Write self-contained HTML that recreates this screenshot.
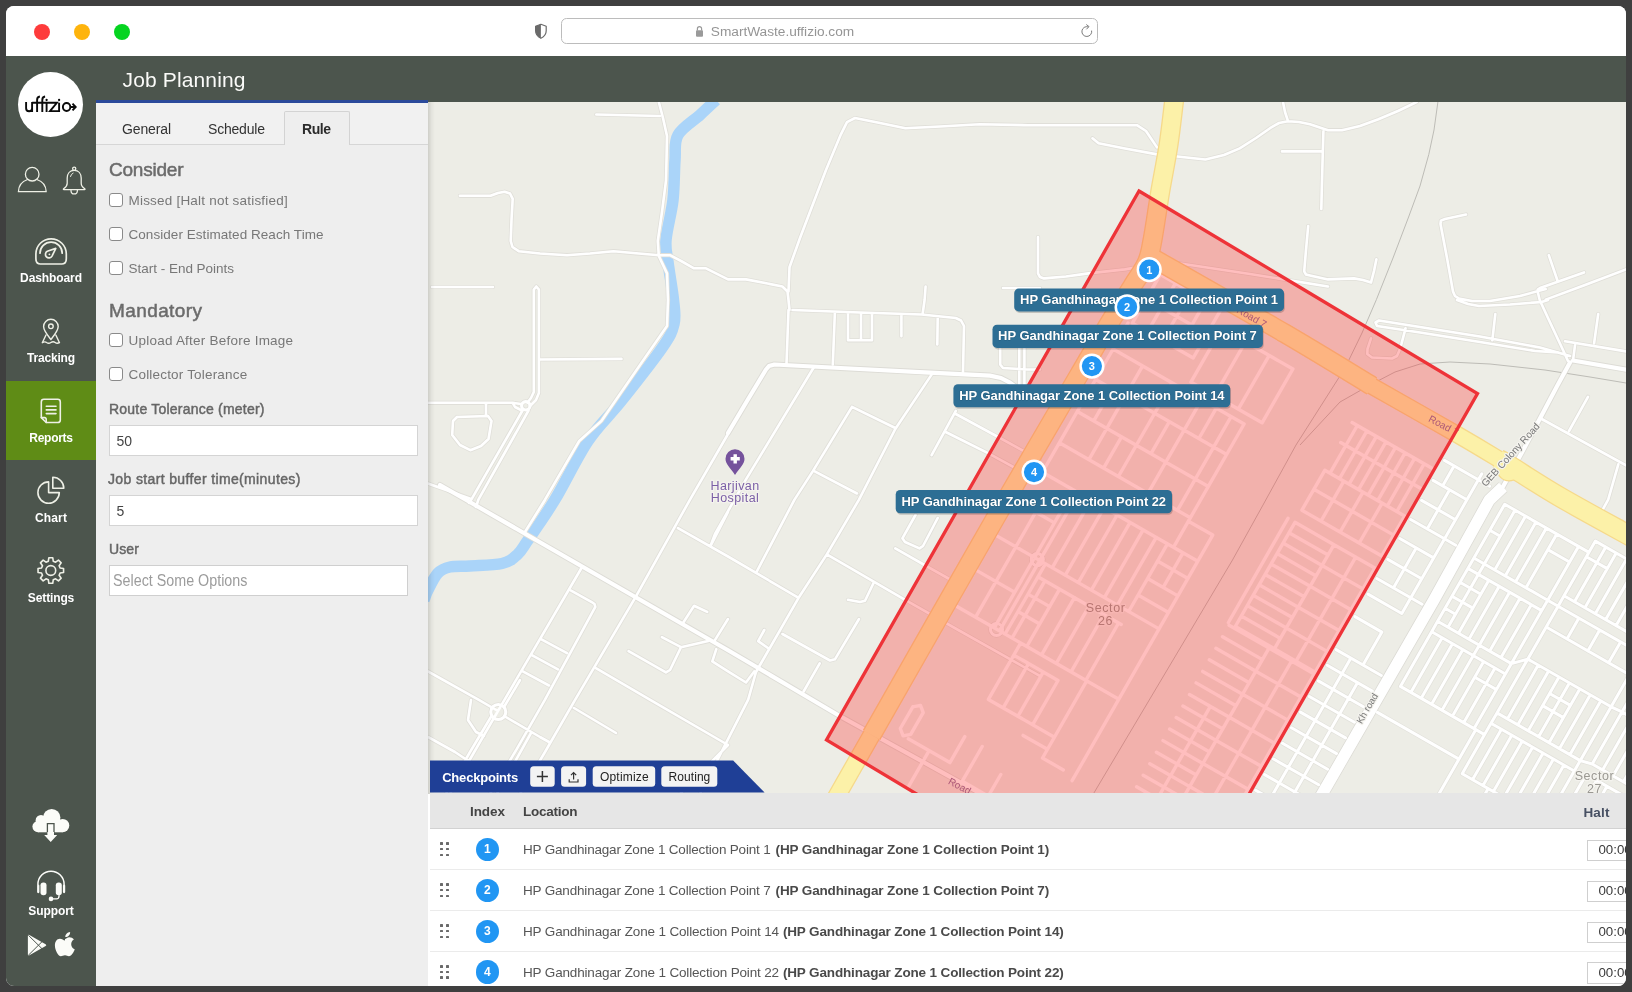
<!DOCTYPE html>
<html>
<head>
<meta charset="utf-8">
<title>Job Planning</title>
<style>
*{box-sizing:border-box;margin:0;padding:0}
html,body{width:1632px;height:992px;overflow:hidden;background:#3f3f3f;font-family:"Liberation Sans",sans-serif;}
.win{position:absolute;left:6px;top:6px;width:1620px;height:980px;border-radius:8px;overflow:hidden;background:#fff;will-change:transform;}
.abs{position:absolute}
.t{position:absolute;white-space:nowrap;line-height:1}
/* title bar */
.tb{position:absolute;left:0;top:0;width:1620px;height:50px;background:#fff}
.dot{position:absolute;top:18px;width:16px;height:16px;border-radius:50%}
.url{position:absolute;left:555px;top:12px;width:537px;height:26px;border:1px solid #bcbcbc;border-radius:5.500px;background:#fff}
/* header */
.hd{position:absolute;left:0;top:50px;width:1620px;height:46px;background:#4c554d}
/* sidebar */
.sb{position:absolute;left:0;top:50px;width:90px;height:930px;background:#4c554d}
.sbl{position:absolute;width:90px;left:0;text-align:center;color:#fff;font-size:12px;font-weight:bold;line-height:1;white-space:nowrap}
/* left panel */
.lp{position:absolute;left:90px;top:94px;width:332px;height:886px;background:#eeeeee;border-top:3px solid #2b4a9b}
.lbl{position:absolute;white-space:nowrap;line-height:1;color:#777;font-size:13.500px}
.cb{position:absolute;width:14px;height:14px;border:1px solid #8a8a8a;border-radius:3px;background:#fff}
.inp{position:absolute;background:#fff;border:1px solid #d4d4d4}
/* map */
.map{position:absolute;left:422px;top:96px;width:1198px;height:692px;background:#ecebe6;overflow:hidden}
/* table */
.tbl{position:absolute;left:424px;top:788px;width:1196px;height:192px;background:#fff}
/*FIT*/#l1{letter-spacing:-0.086px}#l2{letter-spacing:-0.194px}#l3{letter-spacing:-0.291px}#l4{letter-spacing:0.164px}#l5{letter-spacing:-0.135px}#l6{letter-spacing:-0.050px}#c1{letter-spacing:0.207px}#c2{letter-spacing:0.050px}#c3{letter-spacing:-0.013px}#c4{letter-spacing:0.229px}#c5{letter-spacing:0.188px}#f1{letter-spacing:0.218px}#f2{letter-spacing:0.362px}#f3{letter-spacing:0.079px}#h1{letter-spacing:-0.221px}#h2{letter-spacing:0.402px}#tab1{letter-spacing:-0.135px}#tab2{letter-spacing:-0.199px}#tab3{letter-spacing:-0.448px}#jp{letter-spacing:0.142px}#urltxt{letter-spacing:-0.017px}#th1{letter-spacing:-0.066px}#th2{letter-spacing:-0.264px}#th3{letter-spacing:0.161px}#r1a{letter-spacing:-0.185px}#r1b{letter-spacing:-0.145px}#r2a{letter-spacing:-0.185px}#r2b{letter-spacing:-0.145px}#r3a{letter-spacing:-0.158px}#r3b{letter-spacing:-0.146px}#r4a{letter-spacing:-0.158px}#r4b{letter-spacing:-0.146px}#cpt{letter-spacing:-0.202px}#bt1{letter-spacing:0.179px}#bt2{letter-spacing:0.054px}/*ENDFIT*/
</style>
</head>
<body>
<div class="win">
  <!-- TITLE BAR -->
  <div class="tb">
    <div class="dot" style="left:28px;background:#fe3b3b"></div>
    <div class="dot" style="left:68px;background:#feb40c"></div>
    <div class="dot" style="left:108px;background:#05d420"></div>
    <div class="url"></div>
    <div class="t" id="urltxt" style="left:704.800px;top:18.500px;font-size:13.700px;color:#959595">SmartWaste.uffizio.com</div>
    <svg class="abs" style="left:520px;top:10px" width="590" height="32" viewBox="526 16 590 32" fill="none">
      <path d="M540.900 24.300 l5.300 1.900 v4.600 c0 3.600-2.300 6.100-5.300 7.500 c-3-1.400-5.300-3.900-5.300-7.500 v-4.600z" stroke="#6a6a6a" stroke-width="1.200" stroke-linejoin="round"/>
      <path d="M540.900 24.300 l-5.300 1.900 v4.600 c0 3.600 2.300 6.100 5.300 7.500z" fill="#6a6a6a"/>
      <rect x="696" y="30.300" width="7" height="6.400" rx="1" fill="#9a9a9a"/>
      <path d="M697.400 30.500 v-1.800 a2.100 2.100 0 0 1 4.200 0 v1.800" stroke="#9a9a9a" stroke-width="1.200"/>
      <path d="M1091.600 30.600 a4.900 4.900 0 1 1-3.300-3.700" stroke="#7d7d7d" stroke-width="1"/>
      <path d="M1086.300 24.500 l2.700 2.100 l-2.600 2.700" stroke="#7d7d7d" stroke-width="1" stroke-linejoin="round"/>
    </svg>
  </div>
  <!-- HEADER -->
  <div class="hd">
    <div class="t" id="jp" style="left:116.500px;top:13px;font-size:21px;color:#fbfbf9">Job Planning</div>
  </div>
  <!-- SIDEBAR -->
  <div class="sb" id="sb">
    <div class="abs" style="left:0;top:325px;width:90px;height:79px;background:#5f8c16"></div>
    <svg class="abs" style="left:0;top:0" width="90" height="930" viewBox="6 56 90 930" fill="none" stroke="#eef0e6" stroke-width="1.4" stroke-linecap="round" stroke-linejoin="round">
      <!-- logo -->
      <circle cx="50.5" cy="104.5" r="32.5" fill="#fff" stroke="none"/>
      <g stroke="#0b0b0b" stroke-width="1.9" stroke-linecap="butt" stroke-linejoin="miter">
        <path d="M26.1 102 V108.3 a3 3 0 0 0 6 0 V102 M32.1 102 V111.9"/>
        <path d="M32.1 102.8 H56.9 L50 111.1 H59.9"/>
        <path d="M37.1 111.9 V99.9 Q37.1 96.8 39.9 96.5"/>
        <path d="M42.3 111.9 V99.9 Q42.3 96.8 45.1 96.5"/>
        <path d="M46.6 102.8 V111.9 M59.1 102.8 V111.9"/>
        <ellipse cx="66.6" cy="107" rx="3.7" ry="4"/>
        <path d="M70.3 107 H75.2 M72.5 103.6 L75.7 107 L72.5 110.4"/>
      </g>
      <circle cx="46.6" cy="100" r="1.15" fill="#0b0b0b" stroke="none"/>
      <circle cx="59.1" cy="100" r="1.15" fill="#0b0b0b" stroke="none"/>
      <!-- user -->
      <g stroke-width="1.3">
      <circle cx="32.2" cy="174.2" r="6.8"/>
      <path d="M27.6 179.5 C21.5 181.5 18.6 186 18.4 191.7 H46.2 C46 186 43 181.5 36.8 179.5"/>
      <!-- bell -->
      <circle cx="74.2" cy="168.7" r="1.6"/>
      <path d="M74.2 170.3 c-4.4 0-7 3.4-7 7.8 v5.2 c0 2.6-1.6 4.2-3.6 5.4 c-.5.4-.3 1 .3 1 h20.6 c.6 0 .8-.6.3-1 c-2-1.2-3.6-2.8-3.6-5.4 v-5.200 c0-4.4-2.600-7.800-7-7.800z"/>
      <path d="M71 190.400 a3.200 3.500 0 0 0 6.400 0"/>
      <path d="M70.500 176.500 q.5-2.600 2.600-3.400" stroke-width="1"/>
      </g>
      <!-- dashboard -->
      <g stroke-width="1.7">
      <path d="M35.900 254 a15.200 15.200 0 0 1 30.400 0 v4.500 q0 5.500-4.500 5.500 H40.400 q-4.500 0-4.500-5.500z"/>
      <path d="M40 253.200 a11.100 11.100 0 0 1 22.200 0"/>
      <path d="M55.800 248.400 L47.300 251.300 a3.500 3.500 0 1 0 4.700 4.800z"/>
      </g>
      <circle cx="49.400" cy="254.300" r=".9" fill="#eef0e6" stroke="none"/>
      <!-- tracking -->
      <g stroke-width="1.4">
      <path d="M50.900 339.600 C46.500 334 43.600 330.600 43.600 326.600 a7.300 7.300 0 0 1 14.600 0 C58.200 330.600 55.300 334 50.900 339.600z"/>
      <circle cx="50.900" cy="326.300" r="2.300"/>
      <path d="M46 335 L42.300 342.700 q2.600-1.500 4.300-.2 q2.100 1.500 4.300 0 q2.200-1.500 4.300 0 q1.700 1.300 4.300.2 L55.800 335"/>
      </g>
      <!-- reports -->
      <g stroke-width="1.600">
      <path d="M46.200 422.500 H57.700 a2.600 2.600 0 0 0 2.600-2.600 V401.900 a2.600 2.600 0 0 0-2.600-2.600 H43.900 a2.600 2.600 0 0 0-2.600 2.600 V417.600z"/>
      <path d="M41.300 417.600 H44.600 a1.600 1.600 0 0 1 1.600 1.600 V422.500"/>
      <path d="M46.300 406.200 H56 M46.300 409.900 H56 M46.300 413.600 H56"/>
      </g>
      <!-- chart -->
      <g stroke-width="1.600">
      <path d="M48.600 481.900 a10.700 10.700 0 1 0 10.700 10.700 H48.600z"/>
      <path d="M52.800 477.300 a11 11 0 0 1 11 11 H52.800z"/>
      </g>
      <!-- settings -->
      <g stroke-width="1.600">
      <path d="M48.33 561.22 L48.87 557.74 L52.73 557.74 L53.27 561.22 L55.61 562.19 L58.46 560.12 L61.18 562.84 L59.11 565.69 L60.08 568.03 L63.56 568.57 L63.56 572.43 L60.08 572.97 L59.11 575.31 L61.18 578.16 L58.46 580.88 L55.61 578.81 L53.27 579.78 L52.73 583.26 L48.87 583.26 L48.33 579.78 L45.99 578.81 L43.14 580.88 L40.42 578.16 L42.49 575.31 L41.52 572.97 L38.04 572.43 L38.04 568.57 L41.52 568.03 L42.49 565.69 L40.42 562.84 L43.14 560.12 L45.99 562.19 Z"/>
      <circle cx="50.800" cy="570.500" r="4.900"/>
      </g>
      <!-- cloud download -->
      <g fill="#fbfcf8" stroke="none">
        <circle cx="51.7" cy="817.6" r="8.7"/>
        <circle cx="41" cy="820.4" r="5.4"/>
        <circle cx="38" cy="826.6" r="5.6"/>
        <circle cx="62.600" cy="825.600" r="6.700"/>
        <rect x="38" y="820" width="24.600" height="12.300"/>
      </g>
      <path d="M47.400 833.500 V823.600 H54 V833.500" fill="#fbfcf8" stroke="#4c554d" stroke-width="1.300" stroke-linejoin="miter" stroke-linecap="butt"/>
      <path d="M47.400 832 H54 V835 H57.200 L50.700 841.900 L44.200 835 H47.400z" fill="#fbfcf8" stroke="none"/>
      <!-- headset -->
      <path d="M37.900 884.500 a13.100 13.300 0 0 1 26.200 0" stroke-width="1.500" stroke="#fbfcf8"/>
      <g fill="#fbfcf8" stroke="none">
        <rect x="40.500" y="882.400" width="6" height="12.900" rx="2.800"/>
        <rect x="55.800" y="882.400" width="6" height="12.900" rx="2.800"/>
        <rect x="37.100" y="884.600" width="2.300" height="8.600" rx="1.100"/>
        <rect x="62.900" y="884.600" width="2.300" height="8.600" rx="1.100"/>
        <circle cx="51" cy="898.900" r="2.300"/>
      </g>
      <path d="M52 898.800 H56.500 q2.600 0 2.600-3.400" stroke="#fbfcf8" stroke-width="1.300"/>
      <!-- play store -->
      <path d="M27.900 936 q0-1.700 1.500-.9 L45.600 944.300 q1.400.9 0 1.800 L29.400 955.300 q-1.500.8-1.500-.9z" fill="#fbfcf8" stroke="none"/>
      <path d="M28.300 935.200 L42.500 949.200 M28.300 955.300 L42.500 941.200" stroke="#4c554d" stroke-width="1" stroke-linecap="butt"/>
      <!-- apple -->
      <path d="M65 940.400 c-1.500 0-3-1.700-5.100-1.700 c-3 0-5 2.900-5 6.800 c0 4.500 3.200 10.700 6 10.700 c1.400 0 2.300-1 4.100-1 c1.800 0 2.400 1 4 1 c2.400 0 4.800-4 5.700-6.900 c-2.300-1-3.500-2.900-3.500-5.100 c0-2 1-3.600 2.700-4.600 c-1.100-1.500-2.800-2.300-4.600-2.300 c-1.900 0-3 1.700-4.300 1.700z" fill="#fbfcf8" stroke="none"/>
      <path d="M65.300 937.100 c-.2-2.500 2-4.900 4.800-5.100 c.3 2.600-2 5.100-4.800 5.100z" fill="#fbfcf8" stroke="none"/>
    </svg>
    <div class="sbl" id="l1" style="top:215.800px">Dashboard</div>
    <div class="sbl" id="l2" style="top:295.800px">Tracking</div>
    <div class="sbl" id="l3" style="top:375.800px">Reports</div>
    <div class="sbl" id="l4" style="top:455.800px">Chart</div>
    <div class="sbl" id="l5" style="top:535.800px">Settings</div>
    <div class="sbl" id="l6" style="top:849px">Support</div>
  </div>
  <!-- LEFT PANEL -->
  <div class="lp" id="lp"></div>
  <div class="pg" style="position:absolute;left:-6px;top:-6px;width:1632px;height:992px;z-index:5;pointer-events:none">
    <!-- tabs -->
    <div class="abs" style="left:96px;top:103px;width:332px;height:41px;background:#f1f1f1"></div>
    <div class="abs" style="left:96px;top:144px;width:332px;height:1px;background:#d6d6d6"></div>
    <div class="abs" style="left:284px;top:111px;width:66px;height:34px;background:#eeeeee;border:1px solid #d3d3d3;border-bottom:none;border-radius:2px 2px 0 0"></div>
    <div class="t" id="tab1" style="margin-top:.7px;left:122px;top:121px;font-size:14px;color:#333">General</div>
    <div class="t" id="tab2" style="margin-top:.7px;left:208px;top:121px;font-size:14px;color:#333">Schedule</div>
    <div class="t" id="tab3" style="margin-top:.7px;left:302px;top:121px;font-size:14px;color:#2b2b2b;font-weight:bold">Rule</div>
    <!-- consider -->
    <div class="t" id="h1" style="left:109px;top:160px;font-size:19px;color:#6b6b6b;-webkit-text-stroke:0.500px #6b6b6b">Consider</div>
    <div class="cb" style="left:109px;top:193px"></div>
    <div class="lbl" id="c1" style="left:128.500px;top:193.500px">Missed [Halt not satisfied]</div>
    <div class="cb" style="left:109px;top:227px"></div>
    <div class="lbl" id="c2" style="left:128.500px;top:227.700px">Consider Estimated Reach Time</div>
    <div class="cb" style="left:109px;top:261px"></div>
    <div class="lbl" id="c3" style="left:128.500px;top:262px">Start - End Points</div>
    <!-- mandatory -->
    <div class="t" id="h2" style="left:109px;top:301px;font-size:19px;color:#6b6b6b;-webkit-text-stroke:0.500px #6b6b6b">Mandatory</div>
    <div class="cb" style="left:109px;top:333px"></div>
    <div class="lbl" id="c4" style="left:128.500px;top:334px">Upload After Before Image</div>
    <div class="cb" style="left:109px;top:367px"></div>
    <div class="lbl" id="c5" style="left:128.500px;top:368px">Collector Tolerance</div>
    <div class="lbl" id="f1" style="left:109px;top:402px;color:#666;font-size:14px;margin-top:-.4px;-webkit-text-stroke:.45px #666">Route Tolerance (meter)</div>
    <div class="inp" style="left:109px;top:425px;width:309px;height:31px"></div>
    <div class="t" id="v1" style="left:116.500px;top:434px;font-size:14px;color:#444">50</div>
    <div class="lbl" id="f2" style="left:108px;top:472px;color:#666;font-size:14px;margin-top:-.4px;-webkit-text-stroke:.45px #666">Job start buffer time(minutes)</div>
    <div class="inp" style="left:109px;top:495px;width:309px;height:31px"></div>
    <div class="t" id="v2" style="left:116.500px;top:504px;font-size:14px;color:#444">5</div>
    <div class="lbl" id="f3" style="left:109px;top:542px;color:#666;font-size:14px;margin-top:-.4px;-webkit-text-stroke:.45px #666">User</div>
    <div class="inp" style="left:109px;top:565px;width:299px;height:31px;border-color:#cfcfcf"></div>
    <div class="t" id="v3" style="left:113.300px;top:572.500px;font-size:16px;color:#9c9c9c;transform:scaleX(.894);transform-origin:0 0">Select Some Options</div>
    <!-- TABLE (page coords) -->
    <div class="abs" style="left:430px;top:793px;width:1196px;height:36px;background:#e6e6e6;border-bottom:1px solid #d2d2d2"></div>
    <div class="t" id="th1" style="left:470px;top:805px;font-size:13.500px;font-weight:bold;color:#444">Index</div>
    <div class="t" id="th2" style="left:523px;top:805px;font-size:13.500px;font-weight:bold;color:#444">Location</div>
    <div class="t" id="th3" style="left:1583.400px;top:806px;font-size:13.500px;font-weight:bold;color:#475063">Halt</div>
    <div class="abs" style="left:440.3px;top:842.3px;width:2.600px;height:2.600px;background:#6a6a6a;border-radius:.5px"></div>
    <div class="abs" style="left:440.3px;top:847.9px;width:2.600px;height:2.600px;background:#6a6a6a;border-radius:.5px"></div>
    <div class="abs" style="left:440.3px;top:853.5px;width:2.600px;height:2.600px;background:#6a6a6a;border-radius:.5px"></div>
    <div class="abs" style="left:446.4px;top:842.3px;width:2.600px;height:2.600px;background:#6a6a6a;border-radius:.5px"></div>
    <div class="abs" style="left:446.4px;top:847.9px;width:2.600px;height:2.600px;background:#6a6a6a;border-radius:.5px"></div>
    <div class="abs" style="left:446.4px;top:853.5px;width:2.600px;height:2.600px;background:#6a6a6a;border-radius:.5px"></div>
    <div class="abs" style="left:475.7px;top:837.6px;width:23.200px;height:23.200px;border-radius:50%;background:#2196f3"></div>
    <div class="t" style="left:477.3px;top:843.2px;width:20px;text-align:center;font-size:12px;font-weight:bold;color:#fff">1</div>
    <div class="t" id="r1a" style="left:523px;top:843.3px;font-size:13.500px;color:#565656">HP Gandhinagar Zone 1 Collection Point 1</div>
    <div class="t" id="r1b" style="left:775.600px;top:843.3px;font-size:13.500px;font-weight:bold;color:#4a4a4a">(HP Gandhinagar Zone 1 Collection Point 1)</div>
    <div class="abs" style="left:1587px;top:839.6px;width:60px;height:21.600px;border:1px solid #cfcfcf;background:#fff"></div>
    <div class="t" style="left:1598.400px;top:843.2px;font-size:13.3px;color:#3a3a3a">00:00</div>
    <div class="abs" style="left:430px;top:869.2px;width:1196px;height:1px;background:#ebebeb"></div>
    <div class="abs" style="left:440.3px;top:883.3px;width:2.600px;height:2.600px;background:#6a6a6a;border-radius:.5px"></div>
    <div class="abs" style="left:440.3px;top:888.9px;width:2.600px;height:2.600px;background:#6a6a6a;border-radius:.5px"></div>
    <div class="abs" style="left:440.3px;top:894.5px;width:2.600px;height:2.600px;background:#6a6a6a;border-radius:.5px"></div>
    <div class="abs" style="left:446.4px;top:883.3px;width:2.600px;height:2.600px;background:#6a6a6a;border-radius:.5px"></div>
    <div class="abs" style="left:446.4px;top:888.9px;width:2.600px;height:2.600px;background:#6a6a6a;border-radius:.5px"></div>
    <div class="abs" style="left:446.4px;top:894.5px;width:2.600px;height:2.600px;background:#6a6a6a;border-radius:.5px"></div>
    <div class="abs" style="left:475.7px;top:878.6px;width:23.200px;height:23.200px;border-radius:50%;background:#2196f3"></div>
    <div class="t" style="left:477.3px;top:884.2px;width:20px;text-align:center;font-size:12px;font-weight:bold;color:#fff">2</div>
    <div class="t" id="r2a" style="left:523px;top:884.3px;font-size:13.500px;color:#565656">HP Gandhinagar Zone 1 Collection Point 7</div>
    <div class="t" id="r2b" style="left:775.600px;top:884.3px;font-size:13.500px;font-weight:bold;color:#4a4a4a">(HP Gandhinagar Zone 1 Collection Point 7)</div>
    <div class="abs" style="left:1587px;top:880.6px;width:60px;height:21.600px;border:1px solid #cfcfcf;background:#fff"></div>
    <div class="t" style="left:1598.400px;top:884.2px;font-size:13.3px;color:#3a3a3a">00:00</div>
    <div class="abs" style="left:430px;top:910.2px;width:1196px;height:1px;background:#ebebeb"></div>
    <div class="abs" style="left:440.3px;top:924.3px;width:2.600px;height:2.600px;background:#6a6a6a;border-radius:.5px"></div>
    <div class="abs" style="left:440.3px;top:929.9px;width:2.600px;height:2.600px;background:#6a6a6a;border-radius:.5px"></div>
    <div class="abs" style="left:440.3px;top:935.5px;width:2.600px;height:2.600px;background:#6a6a6a;border-radius:.5px"></div>
    <div class="abs" style="left:446.4px;top:924.3px;width:2.600px;height:2.600px;background:#6a6a6a;border-radius:.5px"></div>
    <div class="abs" style="left:446.4px;top:929.9px;width:2.600px;height:2.600px;background:#6a6a6a;border-radius:.5px"></div>
    <div class="abs" style="left:446.4px;top:935.5px;width:2.600px;height:2.600px;background:#6a6a6a;border-radius:.5px"></div>
    <div class="abs" style="left:475.7px;top:919.6px;width:23.200px;height:23.200px;border-radius:50%;background:#2196f3"></div>
    <div class="t" style="left:477.3px;top:925.2px;width:20px;text-align:center;font-size:12px;font-weight:bold;color:#fff">3</div>
    <div class="t" id="r3a" style="left:523px;top:925.3px;font-size:13.500px;color:#565656">HP Gandhinagar Zone 1 Collection Point 14</div>
    <div class="t" id="r3b" style="left:782.900px;top:925.3px;font-size:13.500px;font-weight:bold;color:#4a4a4a">(HP Gandhinagar Zone 1 Collection Point 14)</div>
    <div class="abs" style="left:1587px;top:921.6px;width:60px;height:21.600px;border:1px solid #cfcfcf;background:#fff"></div>
    <div class="t" style="left:1598.400px;top:925.2px;font-size:13.3px;color:#3a3a3a">00:00</div>
    <div class="abs" style="left:430px;top:951.0px;width:1196px;height:1px;background:#ebebeb"></div>
    <div class="abs" style="left:440.3px;top:965.1px;width:2.600px;height:2.600px;background:#6a6a6a;border-radius:.5px"></div>
    <div class="abs" style="left:440.3px;top:970.7px;width:2.600px;height:2.600px;background:#6a6a6a;border-radius:.5px"></div>
    <div class="abs" style="left:440.3px;top:976.3px;width:2.600px;height:2.600px;background:#6a6a6a;border-radius:.5px"></div>
    <div class="abs" style="left:446.4px;top:965.1px;width:2.600px;height:2.600px;background:#6a6a6a;border-radius:.5px"></div>
    <div class="abs" style="left:446.4px;top:970.7px;width:2.600px;height:2.600px;background:#6a6a6a;border-radius:.5px"></div>
    <div class="abs" style="left:446.4px;top:976.3px;width:2.600px;height:2.600px;background:#6a6a6a;border-radius:.5px"></div>
    <div class="abs" style="left:475.7px;top:960.4px;width:23.200px;height:23.200px;border-radius:50%;background:#2196f3"></div>
    <div class="t" style="left:477.3px;top:966.0px;width:20px;text-align:center;font-size:12px;font-weight:bold;color:#fff">4</div>
    <div class="t" id="r4a" style="left:523px;top:966.1px;font-size:13.500px;color:#565656">HP Gandhinagar Zone 1 Collection Point 22</div>
    <div class="t" id="r4b" style="left:782.900px;top:966.1px;font-size:13.500px;font-weight:bold;color:#4a4a4a">(HP Gandhinagar Zone 1 Collection Point 22)</div>
    <div class="abs" style="left:1587px;top:962.4px;width:60px;height:21.600px;border:1px solid #cfcfcf;background:#fff"></div>
    <div class="t" style="left:1598.400px;top:966.0px;font-size:13.3px;color:#3a3a3a">00:00</div>

    <!-- checkpoints bar -->
    <svg class="abs" style="left:430px;top:760px" width="340" height="33" viewBox="430 760 340 33"><path d="M430 760.600 H733.200 L764.600 792.600 H430z" fill="#1f3f96"/>
      <g fill="#f3f3f3"><rect x="530.200" y="766.200" width="24.500" height="20.600" rx="3.500"/><rect x="561.100" y="766.200" width="25" height="20.600" rx="3.500"/><rect x="592.700" y="766.200" width="62.500" height="20.600" rx="3.500"/><rect x="661.300" y="766.200" width="56" height="20.600" rx="3.500"/></g>
      <path d="M542.400 771 V782 M536.900 776.500 H547.900" stroke="#333" stroke-width="1.500" fill="none"/>
      <path d="M573.600 779.500 V772.800 M571 775.200 L573.600 772.600 L576.200 775.200 M569.200 779.300 V782 H578 V779.300" stroke="#333" stroke-width="1.200" fill="none"/>
    </svg>
    <div class="t" id="cpt" style="left:442.200px;top:770.500px;font-size:13px;font-weight:bold;color:#fff">Checkpoints</div>
    <div class="t" id="bt1" style="left:600px;top:771.200px;font-size:12px;color:#222">Optimize</div>
    <div class="t" id="bt2" style="left:668.600px;top:771.200px;font-size:12px;color:#222">Routing</div>

  </div>
  <!-- MAP -->
  <div class="map" id="map"><!--MAP--><svg class="abs" style="left:0;top:0" width="1198" height="692" viewBox="428 102 1198 692" font-family="Liberation Sans, sans-serif">
<defs><linearGradient id="shd" x1="0" x2="1" y1="0" y2="0"><stop offset="0" stop-color="#000" stop-opacity=".13"/><stop offset=".5" stop-color="#000" stop-opacity=".04"/><stop offset="1" stop-color="#000" stop-opacity="0"/></linearGradient><clipPath id="pc"><path d="M1139 191 L1477.5 393.5 L1164.5 942.5 L826.5 740z"/></clipPath></defs>
<rect x="428" y="102" width="1198" height="692" fill="#edede6"/>
<path d="M716 100 C713.3 102.5 706.3 109.2 700 115 C693.7 120.8 682.2 127.5 678 135 C673.8 142.5 675.8 149.2 675 160 C674.2 170.8 674.5 186.7 673 200 C671.5 213.3 666.8 229.7 666 240 C665.2 250.3 666.8 252 668 262 C669.2 272 672.5 289.7 673.5 300 C674.5 310.3 675.9 316 674 324 C672.1 332 670.8 335.2 662 348 C653.2 360.8 633.8 385.3 621.5 400.8 C609.2 416.3 599.1 424.5 588 441 C576.9 457.5 565 483.1 555 499.6 C545 516.1 534.3 530.8 528 540 C521.7 549.2 521.3 551.1 517 555 C512.7 558.9 509.8 561.7 502 563.5 C494.2 565.3 478.7 565.4 470 566 C461.3 566.6 455.3 565.8 450 567 C444.7 568.2 441.7 569.2 438 573 C434.3 576.8 430.3 585.5 428 590 C425.7 594.5 424.7 598.3 424 600" fill="none" stroke="#aad4f9" stroke-width="11.5" stroke-linejoin="round"/>
<path d="M1437.9 102 L1434 130 L1428.8 154.4 L1420 186 L1408.6 217 L1393 258 L1376.4 299.6 L1362 333 L1345 368 L1296 445 L1263 505 L1232.5 560 L1179 650 L1131.4 730 L1093.3 794 M1626 383 L1590 377 L1545 370 L1490 364 L1450 362 L1420 364 L1395 372 L1370 385 L1340 402 L1300 445" fill="none" stroke="#bdbcb6" stroke-width="1"/>
<g fill="none" stroke-linejoin="round" stroke-linecap="round">
<path d="M658.8 102 L663 118 L667 136 L666.5 160 L666 180.6 L662 212 L657.8 241 L658.8 256 L667 273.4 L668 300 L667 326 L641.7 362.5 L601.4 421 L579.2 441 L545 499.6 L524.8 532.3 M596.3 114.5 L659.8 116 M459.9 195.8 L490.5 195.8 L498 193 L504.6 191.7 L510 193.5 L512.7 198.8 L511.5 220 L510.7 241 L512.5 247 L518.7 251.2 L540 253.5 L567 255.2 L590 253.5 L613.5 251.2 L636 253.3 L658.8 255.2 L670 255.2 L682 261.5 L694 268.3 L706 268.3 L728 279.4 L746 279.4 L765 283 L782.4 286.5 L787.5 291.5 L788.5 300 L789.5 310 M432 287 L493 287 M533.8 300 L533.8 289.5 L536.3 286.5 L538.9 289.5 L538.9 300 M788.5 291.5 L789.5 267.3 L800 238 L812.7 204.8 L826 170 L840.9 134.3 L847 122.2 L855 118 L880 123 L905.4 128.2 L940 126.5 L980 124.2 L1028 125.2 L1100 125.2 L1136.9 125.2 L1146 131 L1157 147.4 M925.6 286.5 L924.6 300 L923.6 307 L922.6 314 M1003 288 L1028 288 M1092.5 138.3 L1098.6 143.3 L1125 148.5 L1157 154.4 L1177.2 156.5 L1205.4 159.5 L1224 155 L1239.7 148.4 L1256 138 L1270 128.2 L1279 123 L1288 121.2 L1299 122 L1310 124.2 L1328 130.2 L1342 130.2 L1360 126 L1378.4 119.2 L1398 111 L1416.7 102 M1288 121.2 L1285 112 L1283 102 M1323.4 131.3 L1322.3 170 L1321.3 208.9 M1282 151.4 L1322.4 151.4 M1038 237 L1038 273.4 L1040 277 L1044 278.4 L1066 276.5 L1088.5 273.4 L1124.8 269.4 L1150 265 L1177 263 L1250 274 L1328 286.5 M1308.2 226 L1306 250 L1304.2 271.4 L1306 274.5 L1310 275.4 L1328 279.4 L1354 278.4 L1363 280 L1371 282.5 L1374 271 L1376.4 259.3 M1466 214.5 L1445 219 L1440.9 220.6 L1440.5 224 L1447 258 L1453 291.5 L1455 296 L1459 298.6 L1472 301 L1490 301 L1520 296 L1545.7 289 M1548.8 255.2 L1557.8 281.5 M1584 272.4 L1540 288 L1537.7 289.5 L1538 293 L1539.7 300 L1548 318 L1563 350 L1568 361 M1626 269.4 L1585 285 L1545.7 299.6 M533.8 300 L533.8 392 L531 398 L527.5 402.5 M538.9 300 L538.9 393 L536 400 L530 406 M538.9 359.5 L621.5 358.9 M428 402.8 L512.7 402.8 L521 404 M512.7 402.8 L515 407 L521 410 M522.8 410 L471.3 499.6 L469 503 M528.5 410.5 L478.4 499.6 L476 507 M486 402.8 L486 415.5 M457 417 L488 416 L491.5 421 L488.5 439 L481 446 L470.3 450.2 L460 445 L452.2 435 L453 421 L457 417 M428 483.5 L470.3 498.6 M728 434 L690 499.6 L635.7 596.8 L575.2 699.6 L545 752 L520 794 M792.5 310 L860 312.5 L921.5 314.5 L955.8 318 L961 320.5 L964 326 L963 371.6 M788.5 310 L786.5 363.5 M834.9 312 L832.8 364.5 M848 313 L848 340.3 L872 340.3 L872 314 M861 314 L861 339 M901.4 315 L901.4 336.3 M937.7 318 L937.3 344.4 M813.7 367.5 L746 479.4 L715 534 L710.3 546.4 M931.6 374.6 L895.3 429 L859 499.6 L826.8 554.4 L798.6 597.8 L756 672 L748.2 699.6 L700 794 M852 406.9 L895.3 428 M852 406.9 L812.7 471.4 L794.5 499.6 L756.2 572.6 M814.7 471.4 L857 493.5 M955.8 410.9 L931.6 455.2 M955.8 414 L998.2 437 L1040 460 M945.7 432 L988 453.2 L1030 476 M1000.2 348.4 L1000.2 364.5 L1003 368 L1028 369.5 L1040 369.5 M1019.3 335 L1019.3 400 M1024.4 335 L1024.4 400 M1003 288 L1040 288 M545 500 L524.8 532.3 M581.2 568.5 L504.6 699.6 L480 742 L450 794 M571.1 590.7 L591.3 601.8 L594.5 604 L595.3 606.9 L545 699.6 L515 752 L490 794 M541 639.1 L567 653.2 M531.8 655.2 L558 669.4 M522.8 671.4 L549 685.5 M678 528.2 L728 556.5 L798.6 597.8 M710.3 546.4 L728 512 M596.3 668.3 L649.8 699.6 L728 745 M628.6 651.2 L665.9 672.4 L670 670 L681 647.2 L708.2 641.1 M661.9 637.1 L681 647.2 M683 623 L694.1 605.8 L707.2 611.9 M728 619 L714.3 641.1 M716.3 649.2 L712.3 661.3 L728 671.4 L746 682.5 L754.2 671.4 M428 671.4 L478.4 699.6 L498 711 M826.8 554.4 L903.4 598.8 L960 631 L1040 676 M873.2 583.7 L865 600.8 L860 602 L848 599.8 M859 619 L834.9 659.3 L830 660.5 L782.4 634 M764.3 630 L758.2 641.1 L768.3 648.2 M819.7 663.3 L803.6 691.5 M895.3 548.4 L923.6 564.5 L960 585 M915.5 515 L902.4 538.3 L905 542 L919.5 548.4 L923 546 L937.7 518 M428 737 L455 752 L470 762 M491.5 716 L470 752 L446 794 M505 716.5 L540 737 L549 742 M504 707 L520 680 M471 700 L468 720 L476 732 L484 736 M574 708 L616 733 M531 733 L497 794 M728 745 L680 794 M1379 320.5 L1420 327 L1480 336.5 L1540 347.5 L1557.8 352.4 L1570 356 M1379 320.5 L1375.5 322.5 L1377 326 L1420 332.5 L1480 342 L1535 351 L1557.8 352.4 M1405.6 328.2 L1401.6 343.3 L1399.6 350 L1397 356 L1392 358.5 L1372 357.5 L1367.3 354 L1367.5 349 L1371 338.3 M1495.3 314.1 L1492.3 340.3 M1457 300 L1468 304 L1479 306 L1510 304.5 L1541.7 302 L1548 300 M1598.2 314.1 L1594.1 343.3 M1565 341.3 L1626 351.4 M1575 345.4 L1573 360.5 M1541.7 419 L1626 465.3 M1588 396.8 L1569 431 M1618.3 464.3 L1608.2 499.6 L1597 520" stroke="#e0dfd9" stroke-width="4.2"/>
<path d="M1504.7 504.2 L1578.5 546.4 L1547.7 600.2 L1473.9 558 L1504.7 504.2 M1515.1 510.1 L1484.3 563.9 M1525.6 516.1 L1494.7 569.9 M1536 522.1 L1505.2 575.9 M1546.4 528 L1515.6 581.8 M1556.8 534 L1526 587.8 M1547.8 549.6 L1569.5 562 M1489.8 530.2 L1500.2 536.2 M1473.9 558 L1547.7 600.2 L1541.7 610.6 L1467.9 568.4 L1473.9 558 M1467.9 568.4 L1541.7 610.6 L1511.4 663.6 L1437.6 621.3 L1467.9 568.4 M1478.4 574.3 L1448 627.3 M1488.8 580.3 L1458.5 633.2 M1499.2 586.3 L1468.9 639.2 M1509.6 592.2 L1479.3 645.2 M1520 598.2 L1489.7 651.1 M1531.3 604.7 L1501 657.6 M1460 582.3 L1480.8 594.2 M1452 596.2 L1472.9 608.1 M1445.1 608.3 L1455.5 614.3 M1437.6 621.3 L1511.4 663.6 L1505.4 674 L1431.7 631.7 L1437.6 621.3 M1431.7 631.7 L1505.4 674 L1474.1 728.6 L1400.4 686.4 L1431.7 631.7 M1442.1 637.7 L1410.8 692.4 M1452.5 643.7 L1421.2 698.3 M1462.9 649.6 L1431.6 704.3 M1473.3 655.6 L1442 710.3 M1483.7 661.5 L1452.4 716.2 M1495 668 L1463.7 722.7 M1474.8 677.2 L1496.5 689.6 M1478.4 574.3 L1484.3 563.9 M1473.3 655.6 L1479.3 645.2 M1595.4 541.1 L1678.7 588.8 L1647.4 643.5 L1564 595.8 L1595.4 541.1 M1605.8 547.1 L1574.5 601.7 M1616.2 553 L1584.9 607.7 M1626.6 559 L1595.3 613.7 M1637 564.9 L1605.7 619.6 M1647.4 570.9 L1616.1 625.6 M1657.8 576.9 L1626.5 631.5 M1668.3 582.8 L1636.9 637.5 M1586.4 556.7 L1607.2 568.6 M1641.4 605.5 L1662.3 617.4 M1635.5 615.9 L1656.3 627.9 M1564 595.8 L1647.4 643.5 L1641.4 653.9 L1558.1 606.2 L1564 595.8 M1558.1 606.2 L1641.4 653.9 L1629.5 674.7 L1546.2 627 L1558.1 606.2 M1578.9 618.1 L1567 638.9 M1599.7 630 L1587.8 650.9 M1620.6 642 L1608.6 662.8 M1546.2 627 L1629.5 674.7 L1611.1 706.8 L1527.8 659.1 L1546.2 627 M1527.8 659.1 L1611.1 706.8 L1580.3 760.6 L1497 712.9 L1527.8 659.1 M1538.2 665.1 L1507.4 718.9 M1548.6 671 L1517.8 724.8 M1559 677 L1528.2 730.8 M1569.4 683 L1538.6 736.8 M1579.8 688.9 L1549 742.7 M1590.2 694.9 L1559.4 748.7 M1600.7 700.9 L1569.9 754.7 M1549.6 693.5 L1570.4 705.4 M1542.6 705.6 L1563.4 717.6 M1497 712.9 L1580.3 760.6 L1574.3 771 L1491 723.3 L1497 712.9 M1491 723.3 L1574.3 771 L1545.5 821.4 L1462.2 773.7 L1491 723.3 M1501.4 729.3 L1472.6 779.6 M1511.8 735.3 L1483 785.6 M1522.2 741.2 L1493.4 791.5 M1532.6 747.2 L1503.8 797.5 M1543.1 753.1 L1514.2 803.5 M1553.5 759.1 L1524.6 809.4 M1563.9 765.1 L1535.1 815.4 M1695.5 583.5 L1766.7 624.2 L1734.9 679.8 L1663.7 639 L1695.5 583.5 M1706 589.4 L1674.1 645 M1716.4 595.4 L1684.6 650.9 M1726.8 601.4 L1695 656.9 M1737.2 607.3 L1705.4 662.9 M1747.6 613.3 L1715.8 668.8 M1758 619.3 L1726.2 674.8 M1685.6 600.8 L1706.4 612.8 M1698.5 626.7 L1719.3 638.6 M1663.7 639 L1734.9 679.8 L1728.9 690.2 L1657.8 649.4 L1663.7 639 M1657.8 649.4 L1728.9 690.2 L1699.1 742.3 L1628 701.5 L1657.8 649.4 M1668.2 655.4 L1638.4 707.5 M1678.6 661.4 L1648.8 713.4 M1689 667.3 L1659.2 719.4 M1699.4 673.3 L1669.6 725.4 M1709.8 679.3 L1680 731.3 M1720.2 685.2 L1690.4 737.3 M1658.2 672.8 L1679.1 684.7 M1671.1 698.6 L1691.9 710.5 M1628 701.5 L1699.1 742.3 L1693.1 752.7 L1622 711.9 L1628 701.5 M1622 711.9 L1693.1 752.7 L1663.3 804.7 L1592.2 764 L1622 711.9 M1632.4 717.9 L1602.6 769.9 M1642.8 723.8 L1613 775.9 M1653.2 729.8 L1623.4 781.9 M1663.6 735.8 L1633.8 787.8 M1674.1 741.7 L1644.2 793.8 M1684.5 747.7 L1654.6 799.8 M1586.2 774.4 L1657.4 815.1 L1627 868.1 L1555.9 827.3 L1586.2 774.4 M1596.6 780.4 L1566.3 833.3 M1607 786.3 L1576.7 839.3 M1617.4 792.3 L1587.1 845.2 M1627.9 798.2 L1597.5 851.2 M1638.3 804.2 L1608 857.1 M1648.7 810.2 L1618.4 863.1 M1578.5 546.4 L1588.9 552.4 M1547.7 600.2 L1558.1 606.2 M1511.4 663.6 L1527.8 659.1 M1474.1 728.6 L1484.5 734.6 M1678.7 588.8 L1689.1 594.8 M1647.4 643.5 L1657.8 649.4 M1611.1 706.8 L1622 711.9 M1580.3 760.6 L1592.2 764 M1545.5 821.4 L1555.9 827.3 M1377.4 712.4 L1459 759.1 M1475.9 729.6 L1411.2 842.4 M1436.1 799.1 L1470.8 818.9 M1488.2 788.6 L1450.9 853.6 M1451.8 821.9 L1432.9 854.9 M1481.8 473.8 L1401.8 613.5 M1444.5 460.4 L1478.3 479.8 M1433.1 480.4 L1466.9 499.8 M1421.6 500.4 L1455.5 519.7 M1410.7 519.5 L1444.5 538.8 M1399.8 538.5 L1433.6 557.9 M1387.8 559.4 L1421.7 578.8 M1376.9 578.5 L1410.7 597.8 M1368 594.1 L1401.8 613.5 M1478.3 479.8 L1489.6 486.3 M1444.5 538.8 L1455.8 545.3 M1410.7 597.8 L1422 604.3 M1449.5 489.9 L1427.2 528.9 M1416.2 548 L1393.4 587.9 M1454 465.9 L1442.6 485.9 M1355 616.6 L1381.9 632.1 M1381.9 632.1 L1363 665 M1336.1 649.6 L1381.3 675.5 M1327.2 665.2 L1372.3 691.1 M1318.3 680.9 L1363.4 706.7 M1309.3 696.5 L1354.4 722.3 M1300.4 712.1 L1345.5 737.9 M1291.4 727.7 L1336.5 753.6 M1282.5 743.3 L1327.6 769.2 M1273.5 759 L1318.7 784.8 M1264.6 774.6 L1309.7 800.4 M1255.6 790.2 L1300.8 816 M1350.9 658.1 L1266.4 805.6 M1357.6 682.6 L1282 814.5" stroke="#e2e1db" stroke-width="4.4"/>
<path d="M728 433 L747 401 L766 369.5 L769 366 L774.4 364.5 L850 368.5 L929.6 372.6 L990 375.6 L1001 378 L1010 382.7 L1020 390 M440 485 L466.3 500 L728 650.2 L790 686.7 L838 715 L948 775.6 L985 796 M1573 360.5 L1626 369.6 M1570 362.5 L1557.8 384.7 L1539.7 419 L1521.5 453.2 L1501.4 489.5" stroke="#dddcd6" stroke-width="6"/>
<path d="M1503 487 L1489.3 500 L1433.9 600 L1322.4 793.6 L1318 801" stroke="#dcdbd5" stroke-width="13" stroke-linecap="butt"/>
<circle cx="525.8" cy="405.8" r="4.2" stroke="#e0dfd9" stroke-width="4.5" fill="#edede6"/>
<circle cx="498.3" cy="712" r="7.5" stroke="#e0dfd9" stroke-width="4.5" fill="#edede6"/>
<circle cx="1037.3" cy="559.6" r="6" stroke="#e0dfd9" stroke-width="4.5" fill="#edede6"/>
<circle cx="996.5" cy="629.5" r="6" stroke="#e0dfd9" stroke-width="4.5" fill="#edede6"/>
<path d="M658.8 102 L663 118 L667 136 L666.5 160 L666 180.6 L662 212 L657.8 241 L658.8 256 L667 273.4 L668 300 L667 326 L641.7 362.5 L601.4 421 L579.2 441 L545 499.6 L524.8 532.3 M596.3 114.5 L659.8 116 M459.9 195.8 L490.5 195.8 L498 193 L504.6 191.7 L510 193.5 L512.7 198.8 L511.5 220 L510.7 241 L512.5 247 L518.7 251.2 L540 253.5 L567 255.2 L590 253.5 L613.5 251.2 L636 253.3 L658.8 255.2 L670 255.2 L682 261.5 L694 268.3 L706 268.3 L728 279.4 L746 279.4 L765 283 L782.4 286.5 L787.5 291.5 L788.5 300 L789.5 310 M432 287 L493 287 M533.8 300 L533.8 289.5 L536.3 286.5 L538.9 289.5 L538.9 300 M788.5 291.5 L789.5 267.3 L800 238 L812.7 204.8 L826 170 L840.9 134.3 L847 122.2 L855 118 L880 123 L905.4 128.2 L940 126.5 L980 124.2 L1028 125.2 L1100 125.2 L1136.9 125.2 L1146 131 L1157 147.4 M925.6 286.5 L924.6 300 L923.6 307 L922.6 314 M1003 288 L1028 288 M1092.5 138.3 L1098.6 143.3 L1125 148.5 L1157 154.4 L1177.2 156.5 L1205.4 159.5 L1224 155 L1239.7 148.4 L1256 138 L1270 128.2 L1279 123 L1288 121.2 L1299 122 L1310 124.2 L1328 130.2 L1342 130.2 L1360 126 L1378.4 119.2 L1398 111 L1416.7 102 M1288 121.2 L1285 112 L1283 102 M1323.4 131.3 L1322.3 170 L1321.3 208.9 M1282 151.4 L1322.4 151.4 M1038 237 L1038 273.4 L1040 277 L1044 278.4 L1066 276.5 L1088.5 273.4 L1124.8 269.4 L1150 265 L1177 263 L1250 274 L1328 286.5 M1308.2 226 L1306 250 L1304.2 271.4 L1306 274.5 L1310 275.4 L1328 279.4 L1354 278.4 L1363 280 L1371 282.5 L1374 271 L1376.4 259.3 M1466 214.5 L1445 219 L1440.9 220.6 L1440.5 224 L1447 258 L1453 291.5 L1455 296 L1459 298.6 L1472 301 L1490 301 L1520 296 L1545.7 289 M1548.8 255.2 L1557.8 281.5 M1584 272.4 L1540 288 L1537.7 289.5 L1538 293 L1539.7 300 L1548 318 L1563 350 L1568 361 M1626 269.4 L1585 285 L1545.7 299.6 M533.8 300 L533.8 392 L531 398 L527.5 402.5 M538.9 300 L538.9 393 L536 400 L530 406 M538.9 359.5 L621.5 358.9 M428 402.8 L512.7 402.8 L521 404 M512.7 402.8 L515 407 L521 410 M522.8 410 L471.3 499.6 L469 503 M528.5 410.5 L478.4 499.6 L476 507 M486 402.8 L486 415.5 M457 417 L488 416 L491.5 421 L488.5 439 L481 446 L470.3 450.2 L460 445 L452.2 435 L453 421 L457 417 M428 483.5 L470.3 498.6 M728 434 L690 499.6 L635.7 596.8 L575.2 699.6 L545 752 L520 794 M792.5 310 L860 312.5 L921.5 314.5 L955.8 318 L961 320.5 L964 326 L963 371.6 M788.5 310 L786.5 363.5 M834.9 312 L832.8 364.5 M848 313 L848 340.3 L872 340.3 L872 314 M861 314 L861 339 M901.4 315 L901.4 336.3 M937.7 318 L937.3 344.4 M813.7 367.5 L746 479.4 L715 534 L710.3 546.4 M931.6 374.6 L895.3 429 L859 499.6 L826.8 554.4 L798.6 597.8 L756 672 L748.2 699.6 L700 794 M852 406.9 L895.3 428 M852 406.9 L812.7 471.4 L794.5 499.6 L756.2 572.6 M814.7 471.4 L857 493.5 M955.8 410.9 L931.6 455.2 M955.8 414 L998.2 437 L1040 460 M945.7 432 L988 453.2 L1030 476 M1000.2 348.4 L1000.2 364.5 L1003 368 L1028 369.5 L1040 369.5 M1019.3 335 L1019.3 400 M1024.4 335 L1024.4 400 M1003 288 L1040 288 M545 500 L524.8 532.3 M581.2 568.5 L504.6 699.6 L480 742 L450 794 M571.1 590.7 L591.3 601.8 L594.5 604 L595.3 606.9 L545 699.6 L515 752 L490 794 M541 639.1 L567 653.2 M531.8 655.2 L558 669.4 M522.8 671.4 L549 685.5 M678 528.2 L728 556.5 L798.6 597.8 M710.3 546.4 L728 512 M596.3 668.3 L649.8 699.6 L728 745 M628.6 651.2 L665.9 672.4 L670 670 L681 647.2 L708.2 641.1 M661.9 637.1 L681 647.2 M683 623 L694.1 605.8 L707.2 611.9 M728 619 L714.3 641.1 M716.3 649.2 L712.3 661.3 L728 671.4 L746 682.5 L754.2 671.4 M428 671.4 L478.4 699.6 L498 711 M826.8 554.4 L903.4 598.8 L960 631 L1040 676 M873.2 583.7 L865 600.8 L860 602 L848 599.8 M859 619 L834.9 659.3 L830 660.5 L782.4 634 M764.3 630 L758.2 641.1 L768.3 648.2 M819.7 663.3 L803.6 691.5 M895.3 548.4 L923.6 564.5 L960 585 M915.5 515 L902.4 538.3 L905 542 L919.5 548.4 L923 546 L937.7 518 M428 737 L455 752 L470 762 M491.5 716 L470 752 L446 794 M505 716.5 L540 737 L549 742 M504 707 L520 680 M471 700 L468 720 L476 732 L484 736 M574 708 L616 733 M531 733 L497 794 M728 745 L680 794 M1379 320.5 L1420 327 L1480 336.5 L1540 347.5 L1557.8 352.4 L1570 356 M1379 320.5 L1375.5 322.5 L1377 326 L1420 332.5 L1480 342 L1535 351 L1557.8 352.4 M1405.6 328.2 L1401.6 343.3 L1399.6 350 L1397 356 L1392 358.5 L1372 357.5 L1367.3 354 L1367.5 349 L1371 338.3 M1495.3 314.1 L1492.3 340.3 M1457 300 L1468 304 L1479 306 L1510 304.5 L1541.7 302 L1548 300 M1598.2 314.1 L1594.1 343.3 M1565 341.3 L1626 351.4 M1575 345.4 L1573 360.5 M1541.7 419 L1626 465.3 M1588 396.8 L1569 431 M1618.3 464.3 L1608.2 499.6 L1597 520" stroke="#fff" stroke-width="2.6"/>
<path d="M1504.7 504.2 L1578.5 546.4 L1547.7 600.2 L1473.9 558 L1504.7 504.2 M1515.1 510.1 L1484.3 563.9 M1525.6 516.1 L1494.7 569.9 M1536 522.1 L1505.2 575.9 M1546.4 528 L1515.6 581.8 M1556.8 534 L1526 587.8 M1547.8 549.6 L1569.5 562 M1489.8 530.2 L1500.2 536.2 M1473.9 558 L1547.7 600.2 L1541.7 610.6 L1467.9 568.4 L1473.9 558 M1467.9 568.4 L1541.7 610.6 L1511.4 663.6 L1437.6 621.3 L1467.9 568.4 M1478.4 574.3 L1448 627.3 M1488.8 580.3 L1458.5 633.2 M1499.2 586.3 L1468.9 639.2 M1509.6 592.2 L1479.3 645.2 M1520 598.2 L1489.7 651.1 M1531.3 604.7 L1501 657.6 M1460 582.3 L1480.8 594.2 M1452 596.2 L1472.9 608.1 M1445.1 608.3 L1455.5 614.3 M1437.6 621.3 L1511.4 663.6 L1505.4 674 L1431.7 631.7 L1437.6 621.3 M1431.7 631.7 L1505.4 674 L1474.1 728.6 L1400.4 686.4 L1431.7 631.7 M1442.1 637.7 L1410.8 692.4 M1452.5 643.7 L1421.2 698.3 M1462.9 649.6 L1431.6 704.3 M1473.3 655.6 L1442 710.3 M1483.7 661.5 L1452.4 716.2 M1495 668 L1463.7 722.7 M1474.8 677.2 L1496.5 689.6 M1478.4 574.3 L1484.3 563.9 M1473.3 655.6 L1479.3 645.2 M1595.4 541.1 L1678.7 588.8 L1647.4 643.5 L1564 595.8 L1595.4 541.1 M1605.8 547.1 L1574.5 601.7 M1616.2 553 L1584.9 607.7 M1626.6 559 L1595.3 613.7 M1637 564.9 L1605.7 619.6 M1647.4 570.9 L1616.1 625.6 M1657.8 576.9 L1626.5 631.5 M1668.3 582.8 L1636.9 637.5 M1586.4 556.7 L1607.2 568.6 M1641.4 605.5 L1662.3 617.4 M1635.5 615.9 L1656.3 627.9 M1564 595.8 L1647.4 643.5 L1641.4 653.9 L1558.1 606.2 L1564 595.8 M1558.1 606.2 L1641.4 653.9 L1629.5 674.7 L1546.2 627 L1558.1 606.2 M1578.9 618.1 L1567 638.9 M1599.7 630 L1587.8 650.9 M1620.6 642 L1608.6 662.8 M1546.2 627 L1629.5 674.7 L1611.1 706.8 L1527.8 659.1 L1546.2 627 M1527.8 659.1 L1611.1 706.8 L1580.3 760.6 L1497 712.9 L1527.8 659.1 M1538.2 665.1 L1507.4 718.9 M1548.6 671 L1517.8 724.8 M1559 677 L1528.2 730.8 M1569.4 683 L1538.6 736.8 M1579.8 688.9 L1549 742.7 M1590.2 694.9 L1559.4 748.7 M1600.7 700.9 L1569.9 754.7 M1549.6 693.5 L1570.4 705.4 M1542.6 705.6 L1563.4 717.6 M1497 712.9 L1580.3 760.6 L1574.3 771 L1491 723.3 L1497 712.9 M1491 723.3 L1574.3 771 L1545.5 821.4 L1462.2 773.7 L1491 723.3 M1501.4 729.3 L1472.6 779.6 M1511.8 735.3 L1483 785.6 M1522.2 741.2 L1493.4 791.5 M1532.6 747.2 L1503.8 797.5 M1543.1 753.1 L1514.2 803.5 M1553.5 759.1 L1524.6 809.4 M1563.9 765.1 L1535.1 815.4 M1695.5 583.5 L1766.7 624.2 L1734.9 679.8 L1663.7 639 L1695.5 583.5 M1706 589.4 L1674.1 645 M1716.4 595.4 L1684.6 650.9 M1726.8 601.4 L1695 656.9 M1737.2 607.3 L1705.4 662.9 M1747.6 613.3 L1715.8 668.8 M1758 619.3 L1726.2 674.8 M1685.6 600.8 L1706.4 612.8 M1698.5 626.7 L1719.3 638.6 M1663.7 639 L1734.9 679.8 L1728.9 690.2 L1657.8 649.4 L1663.7 639 M1657.8 649.4 L1728.9 690.2 L1699.1 742.3 L1628 701.5 L1657.8 649.4 M1668.2 655.4 L1638.4 707.5 M1678.6 661.4 L1648.8 713.4 M1689 667.3 L1659.2 719.4 M1699.4 673.3 L1669.6 725.4 M1709.8 679.3 L1680 731.3 M1720.2 685.2 L1690.4 737.3 M1658.2 672.8 L1679.1 684.7 M1671.1 698.6 L1691.9 710.5 M1628 701.5 L1699.1 742.3 L1693.1 752.7 L1622 711.9 L1628 701.5 M1622 711.9 L1693.1 752.7 L1663.3 804.7 L1592.2 764 L1622 711.9 M1632.4 717.9 L1602.6 769.9 M1642.8 723.8 L1613 775.9 M1653.2 729.8 L1623.4 781.9 M1663.6 735.8 L1633.8 787.8 M1674.1 741.7 L1644.2 793.8 M1684.5 747.7 L1654.6 799.8 M1586.2 774.4 L1657.4 815.1 L1627 868.1 L1555.9 827.3 L1586.2 774.4 M1596.6 780.4 L1566.3 833.3 M1607 786.3 L1576.7 839.3 M1617.4 792.3 L1587.1 845.2 M1627.9 798.2 L1597.5 851.2 M1638.3 804.2 L1608 857.1 M1648.7 810.2 L1618.4 863.1 M1578.5 546.4 L1588.9 552.4 M1547.7 600.2 L1558.1 606.2 M1511.4 663.6 L1527.8 659.1 M1474.1 728.6 L1484.5 734.6 M1678.7 588.8 L1689.1 594.8 M1647.4 643.5 L1657.8 649.4 M1611.1 706.8 L1622 711.9 M1580.3 760.6 L1592.2 764 M1545.5 821.4 L1555.9 827.3 M1377.4 712.4 L1459 759.1 M1475.9 729.6 L1411.2 842.4 M1436.1 799.1 L1470.8 818.9 M1488.2 788.6 L1450.9 853.6 M1451.8 821.9 L1432.9 854.9 M1481.8 473.8 L1401.8 613.5 M1444.5 460.4 L1478.3 479.8 M1433.1 480.4 L1466.9 499.8 M1421.6 500.4 L1455.5 519.7 M1410.7 519.5 L1444.5 538.8 M1399.8 538.5 L1433.6 557.9 M1387.8 559.4 L1421.7 578.8 M1376.9 578.5 L1410.7 597.8 M1368 594.1 L1401.8 613.5 M1478.3 479.8 L1489.6 486.3 M1444.5 538.8 L1455.8 545.3 M1410.7 597.8 L1422 604.3 M1449.5 489.9 L1427.2 528.9 M1416.2 548 L1393.4 587.9 M1454 465.9 L1442.6 485.9 M1355 616.6 L1381.9 632.1 M1381.9 632.1 L1363 665 M1336.1 649.6 L1381.3 675.5 M1327.2 665.2 L1372.3 691.1 M1318.3 680.9 L1363.4 706.7 M1309.3 696.5 L1354.4 722.3 M1300.4 712.1 L1345.5 737.9 M1291.4 727.7 L1336.5 753.6 M1282.5 743.3 L1327.6 769.2 M1273.5 759 L1318.7 784.8 M1264.6 774.6 L1309.7 800.4 M1255.6 790.2 L1300.8 816 M1350.9 658.1 L1266.4 805.6 M1357.6 682.6 L1282 814.5" stroke="#fff" stroke-width="3"/>
<path d="M996.8 535.9 L1159 628.9 M956.5 606.2 L1118.8 699.2 M1073.3 489.9 L994.3 627.8 M1078.5 492.8 L999.5 630.8 M1212.7 535.1 L1086.5 755.6 M1045.9 474.2 L1197.8 561.2 M1188.4 521.2 L1212.7 535.1 M1188.4 521.2 L1173.5 547.3 M1016.7 501.2 L1054 522.6 M976.9 570.6 L1014.2 592 M1035.7 512.2 L975.6 617.2 M1035.5 468.2 L1045.9 474.2 M1091.1 500 L1052.3 567.7 M1104.1 507.5 L1065.3 575.2 M1117.1 515 L1078.3 582.6 M1130.1 522.4 L1091.4 590.1 M1143.1 529.9 L1104.4 597.6 M1156.2 537.3 L1117.4 605 M1167.4 543.8 L1128.7 611.5 M1157.5 561.1 L1187.9 578.5 M1147.6 578.5 L1177.9 595.9 M1138.1 595 L1168.5 612.4 M1183.1 552.7 L1163.2 587.4 M1037.9 576.8 L1121.2 624.5 M1044.9 580.8 L1012.1 638 M1059.6 589.2 L1026.8 646.5 M1074.4 597.6 L1041.6 654.9 M1089.1 606.1 L1056.3 663.4 M1103.9 614.5 L1071.1 671.8 M1118.6 623 L1085.8 680.3 M1045.4 563.8 L1005.1 634 M1028 594.1 L1049.7 606.6 M1018 611.5 L1039.7 623.9 M1020.7 643 L988.4 699.4 L1054.4 737.2 M1028.5 663.6 L1003.2 707.8 M1043.3 672 L1017.9 716.3 M1058 680.5 L1032.7 724.7 M1086.7 680.8 L1042.5 758 M1042.5 758 L1063.3 769.9 M1023.1 735.4 L1047.4 749.3 M1013.8 655.1 L1058 680.5 M1086.5 755.6 L1072.1 780.7 M912.8 706.8 L900.3 728.5 L903.1 735.8 L910.7 734.4 L923.2 712.7 L920.5 705.4 L912.8 706.8 M908.3 738.8 L949.9 762.6 L964.8 736.6 M929.1 750.7 L904.2 794.1 M982.2 746.5 L962.3 781.2 L1014.4 811.1 M1000.8 774.5 L988.3 796.1 M1128 323 L1042.5 472.2 M1113 349 L1244.1 424 M1095.7 379.4 L1226.7 454.4 M1077.3 411.5 L1208.3 486.5 M1059.4 442.7 L1190.4 517.8 M1142.6 365.9 L1088.9 459.6 M1172.1 382.8 L1118.4 476.5 M1201.6 399.7 L1147.9 493.4 M1231.1 416.6 L1177.4 510.3 M1244.1 424 L1188.4 521.2 M1112.1 388.8 L1093.8 420.9 M1121.5 436.8 L1103.6 468.1 M1169.4 421.6 L1151 453.7 M1216.3 408.1 L1198.9 438.5 M1160.3 274.6 L1221 309.4 L1193.2 358 L1132.4 323.2 L1160.3 274.6 M1175.4 283.3 L1147.6 331.9 M1190.6 292 L1162.8 340.6 M1205.8 300.7 L1178 349.3 M1146.3 298.9 L1207.1 333.7 M1221.7 328.3 L1292.9 369 L1262.1 422.8 L1190.9 382.1 L1221.7 328.3 M1245.4 341.8 L1214.6 395.6 M1269.2 355.4 L1238.3 409.2 M1288 518.3 L1228.4 622.5 M1334 544.7 L1274.4 648.8 M1355.7 557.1 L1296.1 661.2 M1374.8 568 L1315.2 672.2 M1295 522.3 L1334 544.7 M1289 532.7 L1328.1 555.1 M1283 543.1 L1322.1 565.5 M1277.1 553.6 L1316.1 575.9 M1271.1 564 L1310.2 586.3 M1265.1 574.4 L1304.2 596.8 M1259.2 584.8 L1298.2 607.2 M1253.2 595.2 L1292.3 617.6 M1247.3 605.6 L1286.3 628 M1241.3 616 L1280.3 638.4 M1235.3 626.5 L1274.4 648.8 M1295 522.3 L1235.3 626.5 M1334 544.7 L1374.8 568 M1322.1 565.5 L1362.9 588.9 M1310.2 586.3 L1350.9 609.7 M1298.2 607.2 L1339 630.5 M1286.3 628 L1327.1 651.4 M1274.4 648.8 L1315.2 672.2 M1229.1 625.2 L1269 648.1 M1269 648.1 L1314.2 673.9 M1222.5 636.7 L1262.4 659.6 M1215.9 648.3 L1255.8 671.2 M1255.8 671.2 L1300.9 697 M1209.3 659.8 L1249.2 682.7 M1202.7 671.4 L1242.6 694.2 M1242.6 694.2 L1287.7 720.1 M1196.1 682.9 L1236 705.8 M1189.5 694.5 L1229.4 717.3 M1229.4 717.3 L1274.5 743.2 M1182.9 706 L1222.8 728.9 M1176.2 717.5 L1216.2 740.4 M1216.2 740.4 L1261.3 766.2 M1169.6 729.1 L1209.6 751.9 M1163 740.6 L1202.9 763.5 M1202.9 763.5 L1248.1 789.3 M1156.4 752.2 L1196.3 775 M1149.8 763.7 L1189.7 786.6 M1189.7 786.6 L1234.9 812.4 M1143.2 775.2 L1183.1 798.1 M1136.6 786.8 L1176.5 809.6 M1176.5 809.6 L1221.6 835.5 M1130 798.3 L1169.9 821.2 M1123.4 809.9 L1163.3 832.7 M1163.3 832.7 L1208.4 858.6 M1116.8 821.4 L1156.7 844.3 M1269 648.1 L1155.7 845.9 M1291.6 661 L1178.3 858.8 M1314.2 673.9 L1200.9 871.8 M1210.2 706.6 L1136.6 835 M1357.3 425.5 L1330 473.2 M1366.9 431 L1339.5 478.7 M1376.4 436.4 L1349.1 484.2 M1386 441.9 L1358.6 489.6 M1395.5 447.4 L1368.2 495.1 M1405.1 452.8 L1377.7 500.6 M1414.6 458.3 L1387.3 506 M1424.1 463.8 L1396.8 511.5 M1352.1 422.5 L1432 468.3 M1340.7 442.5 L1420.5 488.2 M1324.8 470.3 L1404.6 516 M1313.9 489.3 L1393.7 535.1 M1301.9 510.2 L1381.8 555.9 M1324.8 470.3 L1301.9 510.2 M1343.9 481.2 L1321 521.1 M1363 492.1 L1340.1 532 M1382.1 503.1 L1359.2 543 M1404.6 516 L1381.8 555.9" stroke="#fff" stroke-width="3.4" clip-path="url(#pc)"/>
<path d="M728 433 L747 401 L766 369.5 L769 366 L774.4 364.5 L850 368.5 L929.6 372.6 L990 375.6 L1001 378 L1010 382.7 L1020 390 M440 485 L466.3 500 L728 650.2 L790 686.7 L838 715 L948 775.6 L985 796 M1573 360.5 L1626 369.6 M1570 362.5 L1557.8 384.7 L1539.7 419 L1521.5 453.2 L1501.4 489.5" stroke="#fff" stroke-width="4.2"/>
<path d="M1503 487 L1489.3 500 L1433.9 600 L1322.4 793.6 L1318 801" stroke="#fff" stroke-width="11.5" stroke-linecap="butt"/>
<circle cx="525.8" cy="405.8" r="4.2" stroke="#fff" stroke-width="3.1"/>
<circle cx="498.3" cy="712" r="7.5" stroke="#fff" stroke-width="3.1"/>
<circle cx="1037.3" cy="559.6" r="6" stroke="#fff" stroke-width="3.1"/>
<circle cx="996.5" cy="629.5" r="6" stroke="#fff" stroke-width="3.1"/>
</g>
<g fill="none" stroke-linejoin="round">
<path d="M1174.2 100 C1173.2 107.5 1170.8 130 1168.5 145 C1166.2 160 1163.2 174.2 1160.5 190 C1157.8 205.8 1154.8 228 1152.5 240 C1150.2 252 1150.2 254.5 1147 262 C1143.8 269.5 1139.2 275 1133 285 C1126.8 295 1119.1 306.9 1110 322 C1100.9 337.1 1097.5 343.2 1078.6 375.5 C1059.7 407.8 1031.1 456.1 996.6 516 C962.1 575.9 892.4 698.5 871.6 735" stroke="#f6d98a" stroke-width="20.1"/>
<path d="M871.6 735 C866 744.8 845.3 781.2 838 794 C830.7 806.8 829.7 809 828 812" stroke="#f6d98a" stroke-width="18.6"/>
<path d="M1151 257 C1173.3 269.8 1248.2 312 1285 333.5 C1321.8 355 1357.5 377.2 1372 386" stroke="#f6d98a" stroke-width="20.1"/>
<path d="M1370 385 C1384.7 393.3 1436.3 422.5 1458 435 C1479.7 447.5 1493 455.8 1500 460" stroke="#f6d98a" stroke-width="17.6"/>
<path d="M1498 459 C1500 460.2 1499.7 459.7 1510 466 C1520.3 472.3 1539.7 485.2 1560 497 C1580.3 508.8 1620 530.3 1632 537" stroke="#f6d98a" stroke-width="21.1"/>
<circle cx="1509" cy="469" r="12.5" fill="#f6d98a"/>
<path d="M1174.2 100 C1173.2 107.5 1170.8 130 1168.5 145 C1166.2 160 1163.2 174.2 1160.5 190 C1157.8 205.8 1154.8 228 1152.5 240 C1150.2 252 1150.2 254.5 1147 262 C1143.8 269.5 1139.2 275 1133 285 C1126.8 295 1119.1 306.9 1110 322 C1100.9 337.1 1097.5 343.2 1078.6 375.5 C1059.7 407.8 1031.1 456.1 996.6 516 C962.1 575.9 892.4 698.5 871.6 735" stroke="#fcf1a8" stroke-width="17.5"/>
<path d="M871.6 735 C866 744.8 845.3 781.2 838 794 C830.7 806.8 829.7 809 828 812" stroke="#fcf1a8" stroke-width="16"/>
<path d="M1151 257 C1173.3 269.8 1248.2 312 1285 333.5 C1321.8 355 1357.5 377.2 1372 386" stroke="#fcf1a8" stroke-width="17.5"/>
<path d="M1370 385 C1384.7 393.3 1436.3 422.5 1458 435 C1479.7 447.5 1493 455.8 1500 460" stroke="#fcf1a8" stroke-width="15"/>
<path d="M1498 459 C1500 460.2 1499.7 459.7 1510 466 C1520.3 472.3 1539.7 485.2 1560 497 C1580.3 508.8 1620 530.3 1632 537" stroke="#fcf1a8" stroke-width="18.5"/>
<circle cx="1509" cy="469" r="11.2" fill="#fcf1a8"/>
</g>
<text x="1105.6" y="612" font-size="12.5" fill="#9a9892" text-anchor="middle" font-weight="normal" stroke="#f4f3ee" stroke-width="2.5" paint-order="stroke" stroke-linejoin="round" letter-spacing="0.6">Sector</text>
<text x="1105.6" y="624.5" font-size="12.5" fill="#9a9892" text-anchor="middle" font-weight="normal" stroke="#f4f3ee" stroke-width="2.5" paint-order="stroke" stroke-linejoin="round" letter-spacing="0.6">26</text>
<text x="1594.5" y="780" font-size="12.5" fill="#9a9892" text-anchor="middle" font-weight="normal" stroke="#f4f3ee" stroke-width="2.5" paint-order="stroke" stroke-linejoin="round" letter-spacing="0.6">Sector</text>
<text x="1594.5" y="792.5" font-size="12.5" fill="#9a9892" text-anchor="middle" font-weight="normal" stroke="#f4f3ee" stroke-width="2.5" paint-order="stroke" stroke-linejoin="round" letter-spacing="0.6">27</text>
<text x="1370" y="710" font-size="9.5" fill="#777" text-anchor="middle" font-weight="normal" transform="rotate(-60 1370 710)" stroke="#f4f3ee" stroke-width="2.5" paint-order="stroke" stroke-linejoin="round">Kh road</text>
<text x="1513" y="457" font-size="10" fill="#777" text-anchor="middle" font-weight="normal" transform="rotate(-48 1513 457)" stroke="#f4f3ee" stroke-width="2.5" paint-order="stroke" stroke-linejoin="round">GEB Colony Road</text>
<text x="1442" y="428.5" font-size="10" fill="#8a6d9a" text-anchor="middle" font-weight="normal" transform="rotate(28 1442 428.5)">Road 7</text>
<text x="1250" y="320" font-size="10" fill="#8a6d9a" text-anchor="middle" font-weight="normal" transform="rotate(30 1250 320)">Road 7</text>
<text x="958" y="789" font-size="10" fill="#8a6d9a" text-anchor="middle" font-weight="normal" transform="rotate(28 958 789)">Road</text>
<path d="M735 475 C730 467.5 725.5 464 725.5 458.8 a9.5 9.5 0 0 1 19 0 C744.5 464 740 467.5 735 475z" fill="#75529c"/>
<path d="M735.2 454.2 v9.2 M730.6 458.8 h9.2" stroke="#fff" stroke-width="3.4" fill="none"/>
<text x="735" y="490" font-size="12.5" fill="#7b5fa6" text-anchor="middle" font-weight="normal" stroke="#f4f3ee" stroke-width="2.5" paint-order="stroke" stroke-linejoin="round" letter-spacing="0.4">Harjivan</text>
<text x="735" y="502" font-size="12.5" fill="#7b5fa6" text-anchor="middle" font-weight="normal" stroke="#f4f3ee" stroke-width="2.5" paint-order="stroke" stroke-linejoin="round" letter-spacing="0.4">Hospital</text>
<path d="M1139 191 L1477.5 393.5 L1164.5 942.5 L826.5 740z" fill="rgba(255,40,40,.30)" stroke="#ee3338" stroke-width="3.3" stroke-linejoin="miter"/>
<rect x="1015" y="290.1" width="269.8" height="22.8" rx="4.5" fill="#000" opacity=".18"/>
<rect x="1014.2" y="288.6" width="269.8" height="22.8" rx="4.5" fill="#2d6e94"/>
<text x="1020.1" y="304" font-size="13" font-weight="bold" fill="#fff" textLength="258" lengthAdjust="spacing" stroke="#1d4d6a" stroke-width=".6" paint-order="stroke">HP Gandhinagar Zone 1 Collection Point 1</text>
<rect x="993.3" y="326.3" width="270.4" height="23.1" rx="4.5" fill="#000" opacity=".18"/>
<rect x="992.5" y="324.8" width="270.4" height="23.1" rx="4.5" fill="#2d6e94"/>
<text x="998.1" y="340.4" font-size="13" font-weight="bold" fill="#fff" textLength="258.7" lengthAdjust="spacing" stroke="#1d4d6a" stroke-width=".6" paint-order="stroke">HP Gandhinagar Zone 1 Collection Point 7</text>
<rect x="954.2" y="385.7" width="276.8" height="23" rx="4.5" fill="#000" opacity=".18"/>
<rect x="953.4" y="384.2" width="276.8" height="23" rx="4.5" fill="#2d6e94"/>
<text x="959.2" y="399.7" font-size="13" font-weight="bold" fill="#fff" textLength="265.4" lengthAdjust="spacing" stroke="#1d4d6a" stroke-width=".6" paint-order="stroke">HP Gandhinagar Zone 1 Collection Point 14</text>
<rect x="896.5" y="491.4" width="276.3" height="23.4" rx="4.5" fill="#000" opacity=".18"/>
<rect x="895.7" y="489.9" width="276.3" height="23.4" rx="4.5" fill="#2d6e94"/>
<text x="901.5" y="505.6" font-size="13" font-weight="bold" fill="#fff" textLength="264.6" lengthAdjust="spacing" stroke="#1d4d6a" stroke-width=".6" paint-order="stroke">HP Gandhinagar Zone 1 Collection Point 22</text>
<circle cx="1149.2" cy="269.7" r="12.6" fill="#fff"/>
<circle cx="1149.2" cy="269.7" r="10.1" fill="#2196f3"/>
<text x="1149.2" y="273.7" font-size="11" font-weight="bold" fill="#fff" text-anchor="middle">1</text>
<circle cx="1127.1" cy="306.9" r="12.6" fill="#fff"/>
<circle cx="1127.1" cy="306.9" r="10.1" fill="#2196f3"/>
<text x="1127.1" y="310.9" font-size="11" font-weight="bold" fill="#fff" text-anchor="middle">2</text>
<circle cx="1091.9" cy="366.1" r="12.6" fill="#fff"/>
<circle cx="1091.9" cy="366.1" r="10.1" fill="#2196f3"/>
<text x="1091.9" y="370.1" font-size="11" font-weight="bold" fill="#fff" text-anchor="middle">3</text>
<circle cx="1034" cy="472.1" r="12.6" fill="#fff"/>
<circle cx="1034" cy="472.1" r="10.1" fill="#2196f3"/>
<text x="1034" y="476.1" font-size="11" font-weight="bold" fill="#fff" text-anchor="middle">4</text>
<rect x="428" y="102" width="7" height="692" fill="url(#shd)"/>
</svg><!--/MAP--></div>
  <!-- TABLE -->
  <div class="tbl" id="tbl"></div>
</div>
</body>
</html>
